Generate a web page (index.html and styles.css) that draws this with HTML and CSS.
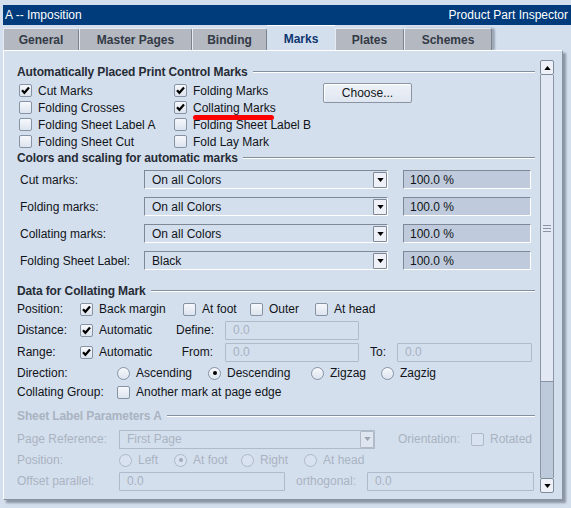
FILE: index.html
```html
<!DOCTYPE html>
<html>
<head>
<meta charset="utf-8">
<title>Imposition - Marks</title>
<link rel="stylesheet" href="styles.css">
</head>
<body>
<div class="titlebar"><span>A -- Imposition</span><span>Product Part Inspector</span></div>
<div class="tabs">
  <div class="tab w-general">General</div>
  <div class="tab w-master">Master Pages</div>
  <div class="tab w-binding">Binding</div>
  <div class="tab sel w-marks">Marks</div>
  <div class="tab w-plates">Plates</div>
  <div class="tab last w-schemes">Schemes</div>
</div>
<div class="panel">
  <div class="form">
    <div class="gtitle"><span>Automatically Placed Print Control Marks</span><i class="rule"></i></div>
    <div class="marks">
      <div class="markgrid">
        <label class="ck"><span class="cb on"><svg viewBox="0 0 13 13"><path d="M3 6.2 L5.4 8.8 L10 3.6"/></svg></span>Cut Marks</label>
        <label class="ck"><span class="cb on"><svg viewBox="0 0 13 13"><path d="M3 6.2 L5.4 8.8 L10 3.6"/></svg></span>Folding Marks</label>
        <label class="ck"><span class="cb"></span>Folding Crosses</label>
        <label class="ck"><span class="cb on"><svg viewBox="0 0 13 13"><path d="M3 6.2 L5.4 8.8 L10 3.6"/></svg></span><span class="annotated">Collating Marks<span class="redline"></span></span></label>
        <label class="ck"><span class="cb"></span>Folding Sheet Label A</label>
        <label class="ck"><span class="cb"></span>Folding Sheet Label B</label>
        <label class="ck"><span class="cb"></span>Folding Sheet Cut</label>
        <label class="ck"><span class="cb"></span>Fold Lay Mark</label>
      </div>
      <div class="btn">Choose...</div>
    </div>

    <div class="gtitle"><span>Colors and scaling for automatic marks</span><i class="rule"></i></div>
    <div class="crow">
      <span class="clbl">Cut marks:</span>
      <div class="combo"><span class="ctext">On all Colors</span><span class="arrow"><svg viewBox="0 0 8 5"><path d="M0 0 H8 L4 5 Z"/></svg></span></div>
      <div class="pct">100.0 %</div>
    </div>
    <div class="crow">
      <span class="clbl">Folding marks:</span>
      <div class="combo"><span class="ctext">On all Colors</span><span class="arrow"><svg viewBox="0 0 8 5"><path d="M0 0 H8 L4 5 Z"/></svg></span></div>
      <div class="pct">100.0 %</div>
    </div>
    <div class="crow">
      <span class="clbl">Collating marks:</span>
      <div class="combo"><span class="ctext">On all Colors</span><span class="arrow"><svg viewBox="0 0 8 5"><path d="M0 0 H8 L4 5 Z"/></svg></span></div>
      <div class="pct">100.0 %</div>
    </div>
    <div class="crow">
      <span class="clbl">Folding Sheet Label:</span>
      <div class="combo"><span class="ctext">Black</span><span class="arrow"><svg viewBox="0 0 8 5"><path d="M0 0 H8 L4 5 Z"/></svg></span></div>
      <div class="pct">100.0 %</div>
    </div>

    <div class="gtitle t3"><span>Data for Collating Mark</span><i class="rule"></i></div>
    <div class="row h20">
      <span class="lbl w63">Position:</span>
      <label class="ck w103"><span class="cb on"><svg viewBox="0 0 13 13"><path d="M3 6.2 L5.4 8.8 L10 3.6"/></svg></span>Back margin</label>
      <label class="ck w67"><span class="cb"></span>At foot</label>
      <label class="ck w65"><span class="cb"></span>Outer</label>
      <label class="ck"><span class="cb"></span>At head</label>
    </div>
    <div class="row h22">
      <span class="lbl w63">Distance:</span>
      <label class="ck w96"><span class="cb on"><svg viewBox="0 0 13 13"><path d="M3 6.2 L5.4 8.8 L10 3.6"/></svg></span>Automatic</label>
      <span class="rlbl">Define:</span>
      <div class="field dis w134">0.0</div>
    </div>
    <div class="row h22">
      <span class="lbl w63">Range:</span>
      <label class="ck w96"><span class="cb on"><svg viewBox="0 0 13 13"><path d="M3 6.2 L5.4 8.8 L10 3.6"/></svg></span>Automatic</label>
      <span class="rlbl">From:</span>
      <div class="field dis w134">0.0</div>
      <span class="tolbl">To:</span>
      <div class="field dis w135">0.0</div>
    </div>
    <div class="row h20">
      <span class="lbl w100">Direction:</span>
      <label class="ck w91"><span class="rb"></span>Ascending</label>
      <label class="ck w103"><span class="rb on"></span>Descending</label>
      <label class="ck w70"><span class="rb"></span>Zigzag</label>
      <label class="ck"><span class="rb"></span>Zagzig</label>
    </div>
    <div class="row h18">
      <span class="lbl w100">Collating Group:</span>
      <label class="ck"><span class="cb"></span>Another mark at page edge</label>
    </div>

    <div class="gtitle t4 disabled"><span>Sheet Label Parameters A</span><i class="rule"></i></div>
    <div class="dsec">
      <div class="row h22 first">
        <span class="lbl w102">Page Reference:</span>
        <div class="combo dis w256"><span class="ctext">First Page</span><span class="arrow"><svg viewBox="0 0 8 5"><path d="M0 0 H8 L4 5 Z"/></svg></span></div>
        <span class="orient">Orientation:</span>
        <label class="ck"><span class="cb"></span>Rotated</label>
      </div>
      <div class="row h20">
        <span class="lbl w102">Position:</span>
        <label class="ck w55"><span class="rb"></span>Left</label>
        <label class="ck w67"><span class="rb on"></span>At foot</label>
        <label class="ck w63"><span class="rb"></span>Right</label>
        <label class="ck"><span class="rb"></span>At head</label>
      </div>
      <div class="row h22">
        <span class="lbl w102">Offset parallel:</span>
        <div class="field dis w166">0.0</div>
        <span class="ortho">orthogonal:</span>
        <div class="field dis w167">0.0</div>
      </div>
    </div>
  </div>

  <div class="scroll">
    <div class="sbtn"><svg viewBox="0 0 8 5"><path d="M0 5 H8 L4 0 Z"/></svg></div>
    <div class="thumb"><svg class="grip" viewBox="0 0 8 7"><path d="M0 0.5 H8 M0 3.5 H8 M0 6.5 H8"/></svg></div>
    <div class="track"></div>
    <div class="sbtn"><svg viewBox="0 0 8 5"><path d="M0 0 H8 L4 5 Z"/></svg></div>
  </div>
</div>
</body>
</html>
```

FILE: styles.css
```css
html, body {
  margin: 0;
  padding: 0;
}
body {
  width: 571px;
  height: 508px;
  overflow: hidden;
  background: #d4dfee;
  font-family: "Liberation Sans", Arial, sans-serif;
  font-size: 12px;
  color: #111418;
}

.titlebar {
  margin: 5px 0 0 3px;
  height: 20px;
  background: #003b7c;
  color: #ffffff;
  display: flex;
  justify-content: space-between;
  align-items: center;
  padding: 0 3px 0 2px;
  font-size: 12px;
}

.tabs {
  display: flex;
  align-items: flex-end;
  height: 25px;
  padding-left: 3px;
}
.tab {
  box-sizing: border-box;
  height: 22px;
  background: #b3b8c1;
  border-top: 1px solid #e6ebf3;
  border-left: 1px solid #e6ebf3;
  border-right: 1px solid #7b838f;
  border-radius: 0 3px 0 0;
  font-weight: bold;
  color: #333a45;
  display: flex;
  align-items: center;
  justify-content: center;
  padding-top: 1px;
}
.tab.sel {
  height: 25px;
  background: #d4dfee;
  color: #0f3670;
  border-top: 1px solid #ffffff;
  border-left: none;
  border-right: none;
  border-radius: 0;
}
.tab.last {
  box-shadow: 3px 0 2px rgba(90, 100, 115, 0.45);
}
.w-general { width: 76px; }
.w-master { width: 113px; }
.w-binding { width: 75px; }
.w-marks { width: 68px; }
.w-plates { width: 69px; }
.w-schemes { width: 88px; }

.panel {
  position: relative;
  margin-left: 3px;
  width: 560px;
  height: 450px;
  box-sizing: border-box;
  border: 1px solid;
  border-color: #ffffff #8a93a0 #8a93a0 #ffffff;
  box-shadow: 3px 3px 2px rgba(80, 90, 105, 0.55);
  background: #d4dfee;
  display: flex;
}

.form {
  width: 536px;
  box-sizing: border-box;
  padding: 13px 5px 0 13px;
}

.gtitle {
  display: flex;
  align-items: center;
  height: 16px;
  font-weight: bold;
  color: #262c35;
  white-space: nowrap;
  letter-spacing: -0.12px;
}
.gtitle .rule {
  flex: 1;
  height: 0;
  margin-left: 5px;
  border-top: 1px solid #858e9b;
  border-bottom: 1px solid #ffffff;
}
.gtitle.t3 { margin-top: 9px; }
.gtitle.t4 { margin-top: 7px; }
.gtitle.disabled { color: #a9b3c1; }

.marks {
  display: flex;
  align-items: flex-start;
  margin-top: 2px;
}
.markgrid {
  display: grid;
  grid-template-columns: 155px 149px;
  grid-auto-rows: 17px;
  margin-left: 2px;
}
.btn {
  box-sizing: border-box;
  width: 89px;
  height: 20px;
  margin-top: 1px;
  border: 1px solid #8a94a2;
  border-radius: 2px;
  background: linear-gradient(#eef2f8, #dfe6f0);
  box-shadow: inset 1px 1px 0 #ffffff;
  display: flex;
  align-items: center;
  justify-content: center;
  color: #111418;
}

.ck {
  display: flex;
  align-items: center;
  gap: 6px;
  white-space: nowrap;
}
.cb, .rb {
  flex: none;
  box-sizing: border-box;
  width: 13px;
  height: 13px;
  border: 1px solid #8693a5;
  background: linear-gradient(#f6f8fc, #dde4ee);
  display: flex;
  align-items: center;
  justify-content: center;
}
.cb { border-radius: 2px; }
.cb svg {
  width: 13px;
  height: 13px;
  margin: -1px;
}
.cb svg path {
  fill: none;
  stroke: #000000;
  stroke-width: 2.2;
}
.rb { border-radius: 50%; }
.rb.on::after {
  content: "";
  width: 4px;
  height: 4px;
  border-radius: 50%;
  background: #000000;
}

.annotated {
  position: relative;
}
.redline {
  position: absolute;
  left: 0;
  top: 14px;
  width: 81px;
  height: 5px;
  border-radius: 3px;
  background: #ff0000;
}

.crow {
  display: flex;
  align-items: center;
  height: 27px;
}
.clbl {
  width: 124px;
  margin-left: 3px;
}
.combo {
  box-sizing: border-box;
  width: 244px;
  height: 19px;
  border: 1px solid;
  border-color: #7e8896 #ffffff #ffffff #7e8896;
  display: flex;
  align-items: center;
  justify-content: space-between;
}
.ctext { padding-left: 7px; }
.arrow {
  box-sizing: border-box;
  width: 14px;
  height: 16px;
  border: 1px solid #7e8896;
  border-radius: 1px;
  background: #eef2f8;
  display: flex;
  align-items: center;
  justify-content: center;
}
.arrow svg { width: 7px; height: 4px; }
.arrow svg path { fill: #000000; }
.pct {
  box-sizing: border-box;
  width: 128px;
  height: 19px;
  margin-left: 15px;
  padding-left: 6px;
  background: #bfcbdc;
  border: 1px solid;
  border-color: #7e8896 #ffffff #ffffff #7e8896;
  display: flex;
  align-items: center;
}

.row {
  display: flex;
  align-items: center;
  white-space: nowrap;
}
.h18 { height: 18px; }
.h20 { height: 20px; }
.h22 { height: 22px; }
.lbl { flex: none; }
.w55 { width: 55px; }
.w63 { width: 63px; }
.w65 { width: 65px; }
.w67 { width: 67px; }
.w70 { width: 70px; }
.w91 { width: 91px; }
.w96 { width: 96px; }
.w100 { width: 100px; }
.w102 { width: 102px; }
.w103 { width: 103px; }
.w134 { width: 134px; }
.w135 { width: 135px; }
.w166 { width: 166px; }
.w167 { width: 167px; }
.w256 { width: 256px; }

.rlbl {
  width: 37px;
  text-align: right;
  flex: none;
}
.tolbl {
  width: 27px;
  padding-left: 11px;
  flex: none;
}
.field {
  box-sizing: border-box;
  height: 19px;
  padding-left: 7px;
  display: flex;
  align-items: center;
  flex: none;
}
.field.dis {
  border: 1px solid #b0bac8;
  border-radius: 1px;
  color: #a7b1bf;
}
.row > .field.dis.w134 { margin-left: 12px; }

.dsec { color: #a9b3c1; }
.dsec .cb, .dsec .rb {
  border-color: #aeb8c6;
  background: #d8e2f0;
}
.dsec .rb.on::after { background: #a0aab8; }
.dsec .row.first { margin-top: 4px; }
.combo.dis {
  border: 1px solid #b0bac8;
}
.combo.dis .arrow {
  border-color: #b0bac8;
  background: #dfe6f0;
  height: 17px;
}
.combo.dis .arrow svg path { fill: #9aa4b2; }
.orient {
  margin-left: 23px;
  width: 73px;
  flex: none;
}
.ortho {
  width: 71px;
  padding-left: 11px;
  flex: none;
}

.scroll {
  margin-top: 9px;
  width: 14px;
  height: 433px;
  display: flex;
  flex-direction: column;
}
.sbtn {
  box-sizing: border-box;
  height: 15px;
  border: 1px solid #7f8a99;
  border-radius: 2px;
  background: #eef2f8;
  display: flex;
  align-items: center;
  justify-content: center;
}
.sbtn svg { width: 7px; height: 4px; }
.sbtn svg path { fill: #000000; }
.thumb {
  box-sizing: border-box;
  height: 307px;
  background: #e2e8f4;
  border: 1px solid #8a94a2;
  border-top: none;
  display: flex;
  align-items: center;
  justify-content: center;
}
.grip { width: 8px; height: 7px; }
.grip path { stroke: #8a94a2; stroke-width: 1; }
.track {
  flex: 1;
  background: #bccadb;
  border-left: 1px solid #8a94a2;
  border-right: 1px solid #8a94a2;
}
```
